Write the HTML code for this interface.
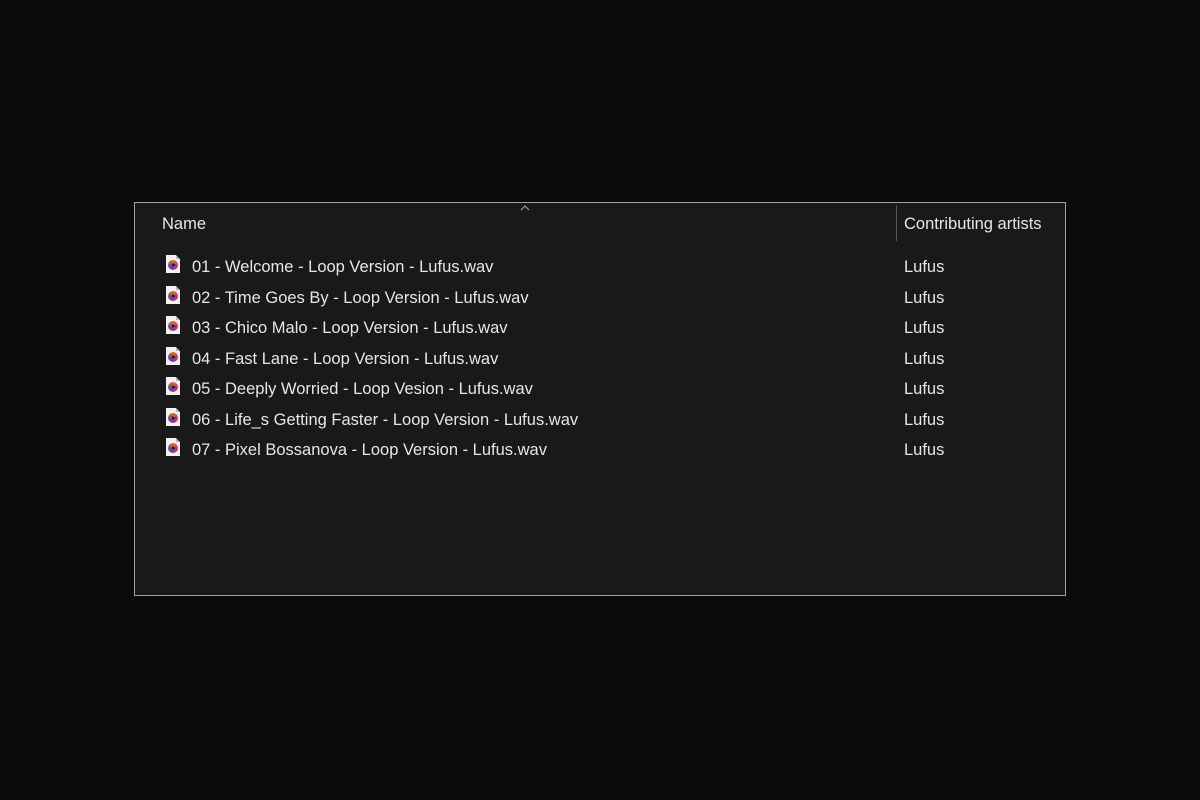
<!DOCTYPE html>
<html><head><style>
body{margin:0;width:1200px;height:800px;background:#0a0a0a;position:relative;overflow:hidden;font-family:"Liberation Sans",sans-serif;color:#e6e6e6;font-size:16.5px}
#box{position:absolute;left:134px;top:202px;width:930px;height:392px;border:1px solid #a0a0a0;background:#191919}
.t{position:absolute;white-space:nowrap;line-height:20px}
.sep{position:absolute;left:761px;top:2px;width:1px;height:36px;background:#555}
.ic{position:absolute;width:14px;height:18px;background:#f2f2f2}
.ic:after{content:"";position:absolute;left:2px;top:5px;width:10px;height:10px;border-radius:50%;background:conic-gradient(#e86a1c,#c1307a,#6a3fb8,#e86a1c)}
.ic:before{content:"";position:absolute;right:0;top:0;border-style:solid;border-width:0 4px 4px 0;border-color:transparent #191919 #bbb transparent;z-index:1}
.ic i{position:absolute;left:6px;top:8px;border-style:solid;border-width:2px 0 2px 4px;border-color:transparent transparent transparent #222;z-index:2}
</style></head><body>
<div id="box">
<div class="t" style="left:27px;top:11px">Name</div>
<svg style="position:absolute;left:385px;top:2px" width="10" height="6"><path d="M1 5 L5 1 L9 5" stroke="#aaa" fill="none" stroke-width="1"/></svg>
<div class="sep"></div>
<div class="t" style="left:769px;top:11px">Contributing artists</div>
</div>
<script>
var n=["01 - Welcome - Loop Version - Lufus.wav","02 - Time Goes By - Loop Version - Lufus.wav","03 - Chico Malo - Loop Version - Lufus.wav","04 - Fast Lane - Loop Version - Lufus.wav","05 - Deeply Worried - Loop Vesion - Lufus.wav","06 - Life_s Getting Faster - Loop Version - Lufus.wav","07 - Pixel Bossanova - Loop Version - Lufus.wav"];
var h="";n.forEach(function(s,i){var y=257+i*30.5;h+='<div class="ic" style="left:166px;top:'+(y-2)+'px"><i></i></div><div class="t" style="left:192px;top:'+y+'px">'+s+'</div><div class="t" style="left:904px;top:'+y+'px">Lufus</div>';});
document.body.insertAdjacentHTML("beforeend",h);
</script>
</body></html>
